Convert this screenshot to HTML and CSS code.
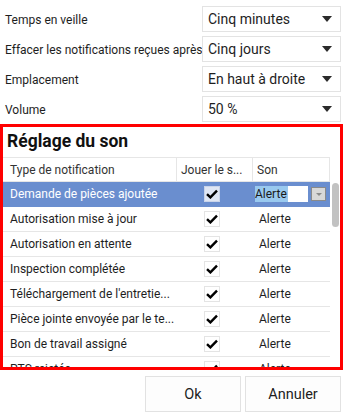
FILE: index.html
```html
<!DOCTYPE html>
<html lang="fr">
<head>
    <meta charset="UTF-8">
    <title>Notifications</title>
    <link rel="stylesheet" href="styles.css">
</head>
<body>

    <div class="options">
        <span class="optLabel">Temps en veille</span>
        <div class="combo"><span>Cinq minutes</span><i class="arrow"></i></div>

        <span class="optLabel">Effacer les notifications reçues après</span>
        <div class="combo"><span>Cinq jours</span><i class="arrow"></i></div>

        <span class="optLabel">Emplacement</span>
        <div class="combo"><span>En haut à droite</span><i class="arrow"></i></div>

        <span class="optLabel">Volume</span>
        <div class="combo"><span>50 %</span><i class="arrow"></i></div>
    </div>

    <div class="soundBox">
        <h2 class="soundTitle">Réglage du son</h2>

        <div class="grid">
            <div class="list">
                <div class="head">
                    <span class="c1">Type de notification</span>
                    <span class="c2">Jouer le s...</span>
                    <span class="c3">Son</span>
                </div>

                <div class="row selected">
                    <span class="c1">Demande de pièces ajoutée</span>
                    <span class="c2"><i class="chk"><svg viewBox="0 0 12 10" width="12" height="10"><path d="M1 5.2 L4.4 8.4 L11 1.6" fill="none" stroke="#000" stroke-width="2.4"/></svg></i></span>
                    <span class="c3 editor">
                        <span class="editBox"><span class="sel">Alerte</span></span>
                        <span class="dropBtn"><i></i></span>
                    </span>
                </div>

                <div class="row">
                    <span class="c1">Autorisation mise à jour</span>
                    <span class="c2"><i class="chk"><svg viewBox="0 0 12 10" width="12" height="10"><path d="M1 5.2 L4.4 8.4 L11 1.6" fill="none" stroke="#000" stroke-width="2.4"/></svg></i></span>
                    <span class="c3">Alerte</span>
                </div>

                <div class="row">
                    <span class="c1">Autorisation en attente</span>
                    <span class="c2"><i class="chk"><svg viewBox="0 0 12 10" width="12" height="10"><path d="M1 5.2 L4.4 8.4 L11 1.6" fill="none" stroke="#000" stroke-width="2.4"/></svg></i></span>
                    <span class="c3">Alerte</span>
                </div>

                <div class="row">
                    <span class="c1">Inspection complétée</span>
                    <span class="c2"><i class="chk"><svg viewBox="0 0 12 10" width="12" height="10"><path d="M1 5.2 L4.4 8.4 L11 1.6" fill="none" stroke="#000" stroke-width="2.4"/></svg></i></span>
                    <span class="c3">Alerte</span>
                </div>

                <div class="row">
                    <span class="c1">Téléchargement de l'entretie...</span>
                    <span class="c2"><i class="chk"><svg viewBox="0 0 12 10" width="12" height="10"><path d="M1 5.2 L4.4 8.4 L11 1.6" fill="none" stroke="#000" stroke-width="2.4"/></svg></i></span>
                    <span class="c3">Alerte</span>
                </div>

                <div class="row">
                    <span class="c1">Pièce jointe envoyée par le te...</span>
                    <span class="c2"><i class="chk"><svg viewBox="0 0 12 10" width="12" height="10"><path d="M1 5.2 L4.4 8.4 L11 1.6" fill="none" stroke="#000" stroke-width="2.4"/></svg></i></span>
                    <span class="c3">Alerte</span>
                </div>

                <div class="row">
                    <span class="c1">Bon de travail assigné</span>
                    <span class="c2"><i class="chk"><svg viewBox="0 0 12 10" width="12" height="10"><path d="M1 5.2 L4.4 8.4 L11 1.6" fill="none" stroke="#000" stroke-width="2.4"/></svg></i></span>
                    <span class="c3">Alerte</span>
                </div>

                <div class="row">
                    <span class="c1">PTS rejetée</span>
                    <span class="c2"><i class="chk"><svg viewBox="0 0 12 10" width="12" height="10"><path d="M1 5.2 L4.4 8.4 L11 1.6" fill="none" stroke="#000" stroke-width="2.4"/></svg></i></span>
                    <span class="c3">Alerte</span>
                </div>
            </div>

            <div class="scroll">
                <div class="thumb"></div>
            </div>
        </div>
    </div>

    <div class="footer">
        <button class="btn">Ok</button>
        <button class="btn">Annuler</button>
    </div>

</body>
</html>
```

FILE: styles.css
```css
html {
    margin: 0;
    padding: 0;
}

body {
    margin: 0;
    padding: 0;
    width: 346px;
    height: 418px;
    overflow: hidden;
    background: #fff;
    color: #1e1e1e;
    font-family: Roboto, "Noto Sans", sans-serif;
    font-size: 12px;
}

.options {
    display: grid;
    grid-template-columns: minmax(0, 1fr) 139px;
    grid-auto-rows: 26px;
    row-gap: 4px;
    padding: 6px 5px 0 5px;
}

.optLabel {
    display: flex;
    align-items: center;
    padding-top: 2px;
    white-space: nowrap;
    font-size: 12px;
}

.combo {
    display: flex;
    align-items: center;
    justify-content: space-between;
    box-sizing: border-box;
    border: 1px solid #e3e3e3;
    background: #fff;
    padding: 0 8px 0 5px;
    font-size: 14px;
}

.arrow {
    width: 0;
    height: 0;
    border-left: 5.5px solid transparent;
    border-right: 5.5px solid transparent;
    border-top: 6px solid #2b2b2b;
    margin-top: -1px;
}

.soundBox {
    box-sizing: border-box;
    width: 343px;
    height: 246px;
    margin-top: 2px;
    border: 3px solid #ff0000;
    overflow: hidden;
}

.soundTitle {
    margin: 0;
    height: 30px;
    padding: 2px 0 0 4px;
    box-sizing: border-box;
    font-size: 17.5px;
    font-weight: bold;
    line-height: 24px;
    color: #111;
}

.grid {
    display: flex;
}

.list {
    width: 327px;
}

.head,
.row {
    display: grid;
    grid-template-columns: 174px 76px 77px;
    height: 25px;
    box-sizing: border-box;
    border-bottom: 1px solid #e6e6e6;
    align-items: center;
    white-space: nowrap;
    font-size: 12px;
}

.head {
    height: 25px;
    border-top: 1px solid #e6e6e6;
    color: #333;
}

.head span {
    height: 100%;
    display: flex;
    align-items: center;
    border-right: 1px solid #e6e6e6;
}

.c1 {
    padding-left: 7px;
    overflow: hidden;
}

.head .c2,
.head .c3 {
    padding-left: 4px;
}

.row .c2 {
    padding-left: 27px;
    display: flex;
}

.row .c3 {
    padding-left: 6px;
}

.chk {
    display: flex;
    align-items: center;
    justify-content: center;
    width: 16px;
    height: 16px;
    box-sizing: border-box;
    border: 1px solid #e4e4e4;
    background: #fff;
}

.selected {
    background: #6a8ecf;
    color: #fff;
    border-bottom-color: #6a8ecf;
}

.selected .chk {
    background: #dfe6f4;
    border-color: #c9d4ea;
}

.row .editor {
    display: flex;
    align-items: center;
    padding-left: 2px;
    gap: 3px;
}

.editBox {
    width: 53px;
    height: 16px;
    background: #fff;
    display: flex;
    align-items: center;
}

.sel {
    background: #99c9ef;
    color: #1a1a1a;
    line-height: 16px;
    padding: 0 1px 0 0;
}

.dropBtn {
    width: 15px;
    height: 14px;
    box-sizing: border-box;
    border: 1px solid #8a8a8a;
    background: #d8d8d8;
    display: flex;
    align-items: center;
    justify-content: center;
}

.dropBtn i {
    width: 0;
    height: 0;
    border-left: 3px solid transparent;
    border-right: 3px solid transparent;
    border-top: 3px solid #8c8c8c;
}

.scroll {
    width: 10px;
    padding-top: 26px;
    display: flex;
    justify-content: center;
}

.thumb {
    width: 7px;
    height: 44px;
    margin-left: 1px;
    border-radius: 4px;
    background: #c2c2c2;
}

.footer {
    display: flex;
    justify-content: flex-end;
    gap: 4px;
    padding: 6px 5px 0 0;
}

.btn {
    width: 96px;
    height: 36px;
    background: #fdfdfd;
    border: 1px solid #e2e2e2;
    font-family: inherit;
    font-size: 14.5px;
    color: #1e1e1e;
    padding: 0;
}
```
